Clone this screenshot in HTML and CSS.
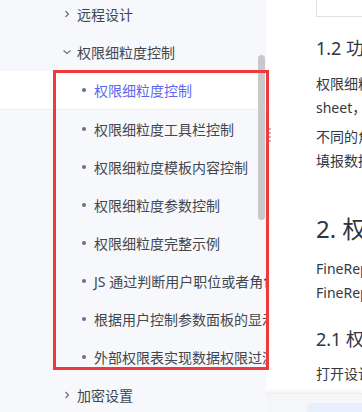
FILE: index.html
```html
<!DOCTYPE html>
<html lang="zh-CN">
<head>
  <meta charset="UTF-8">
  <title>权限细粒度控制</title>
  <link rel="stylesheet" href="styles.css">
</head>
<body>
  <div class="page">
    <aside class="sidebar">
      <ul class="menu">
        <li class="group">
          <svg class="arrow" width="10" height="10" viewBox="0 0 10 10"><path d="M3.5 2 L6.5 5 L3.5 8" fill="none" stroke="#6b7080" stroke-width="1.2"/></svg>
          <span>远程设计</span>
        </li>
        <li class="group">
          <svg class="arrow" width="10" height="10" viewBox="0 0 10 10"><path d="M1.5 3.5 L5 6.5 L8.5 3.5" fill="none" stroke="#6b7080" stroke-width="1.2"/></svg>
          <span>权限细粒度控制</span>
        </li>
        <li class="item active"><i class="dot"></i><span>权限细粒度控制</span></li>
        <li class="item"><i class="dot"></i><span>权限细粒度工具栏控制</span></li>
        <li class="item"><i class="dot"></i><span>权限细粒度模板内容控制</span></li>
        <li class="item"><i class="dot"></i><span>权限细粒度参数控制</span></li>
        <li class="item"><i class="dot"></i><span>权限细粒度完整示例</span></li>
        <li class="item"><i class="dot"></i><span>JS 通过判断用户职位或者角色控制按钮显示</span></li>
        <li class="item"><i class="dot"></i><span>根据用户控制参数面板的显示</span></li>
        <li class="item"><i class="dot"></i><span>外部权限表实现数据权限过滤</span></li>
        <li class="group">
          <svg class="arrow" width="10" height="10" viewBox="0 0 10 10"><path d="M3.5 2 L6.5 5 L3.5 8" fill="none" stroke="#6b7080" stroke-width="1.2"/></svg>
          <span>加密设置</span>
        </li>
      </ul>
      <div class="thumb"></div>
    </aside>

    <main class="main">
      <div class="doc">
        <div class="search-box"></div>
        <h3>1.2 功能简介</h3>
        <p>权限细粒度控制可以对模板中的每一个<br>sheet，工具栏按钮，参数控件进行控制，</p>
        <p>不同的角色登录后看到不同的内容，或者<br>填报数据时只能操作授权范围内的单元格。</p>
        <h2>2. 权限细粒度控制</h2>
        <p>FineReport 设计器中打开模板后，<br>FineReport 服务器中开启权限控制。</p>
        <h3>2.1 权限细粒度设置</h3>
        <p>打开设计器，点击服务器&gt;权限控制。</p>
      </div>
      <div class="footer"><div class="footer-tab"></div></div>
    </main>

    <div class="handle"><i></i><i></i><i></i><i></i></div>
    <div class="mark"></div>
  </div>
</body>
</html>
```

FILE: styles.css
```css
body { margin: 0; font-family: "Noto Sans", "Noto Sans CJK SC", sans-serif; background: #fff; overflow: hidden; }
.page { position: relative; display: flex; width: 362px; height: 412px; overflow: hidden; }

.sidebar {
  position: relative;
  flex: 0 0 266px;
  height: 412px;
  background: #f7f8fb;
  overflow: hidden;
}
.menu { list-style: none; margin: -5px 0 0; padding: 0; }
.menu li {
  display: flex;
  align-items: center;
  height: 38px;
  font-size: 14px;
  color: #42464f;
  white-space: nowrap;
}
.group { padding-left: 62px; }
.group .arrow { margin-right: 5px; flex: none; }
.item { padding-left: 82px; }
.item.active { background: #fff; border-bottom: 1px solid #eceef2; height: 38px; }
.item.active span { color: #5e66ef; }
.dot {
  width: 4px; height: 4px;
  border-radius: 50%;
  background: #6b7080;
  margin-right: 8px;
  flex: none;
}
.thumb {
  position: absolute;
  left: 258px; top: 55px;
  width: 7px; height: 165px;
  border-radius: 4px;
  background: #c9c9cb;
}

.main { flex: 1; display: flex; flex-direction: column; min-width: 0; height: 412px; }
.doc { flex: 1; overflow: hidden; padding-left: 50px; color: #333844; }
.search-box {
  width: 200px; height: 16px;
  border-left: 1px solid #dcdfe4;
  border-bottom: 1px solid #dcdfe4;
}
.doc h3 { margin: 19px 0 0; font-size: 18px; font-weight: normal; line-height: 24px; white-space: nowrap; color: #2f3440; }
.doc h2 { margin: 40px 0 0; font-size: 24px; font-weight: normal; line-height: 32px; white-space: nowrap; color: #2f3440; }
.doc p { margin: 12px 0 0; font-size: 14px; line-height: 24px; white-space: nowrap; }
.doc p + p { margin-top: 5px; }
.doc h2 + p { margin-top: 12px; }
.doc h3 + p { margin-top: 12px; }
.doc p + h3 { margin-top: 22px; }
.doc h3:last-of-type + p { margin-top: 11px; }

.footer {
  height: 19px;
  background: #f5f6f9;
  box-shadow: 0 -2px 4px rgba(0,0,0,0.06);
  border-top: 1px solid #eceef2;
  padding: 9px 0 0 41px;
  box-sizing: border-box;
}
.footer-tab { height: 10px; background: #e7eefc; border-radius: 6px 0 0 0; }

.handle {
  position: absolute;
  left: 269px; top: 128px;
  display: flex; flex-direction: column; gap: 2px;
}
.handle i { width: 2px; height: 2px; background: #b9bcc4; }

.mark {
  position: absolute;
  left: 53px; top: 70px;
  width: 210px; height: 294px;
  border: 3px solid #f0393b;
}
```
